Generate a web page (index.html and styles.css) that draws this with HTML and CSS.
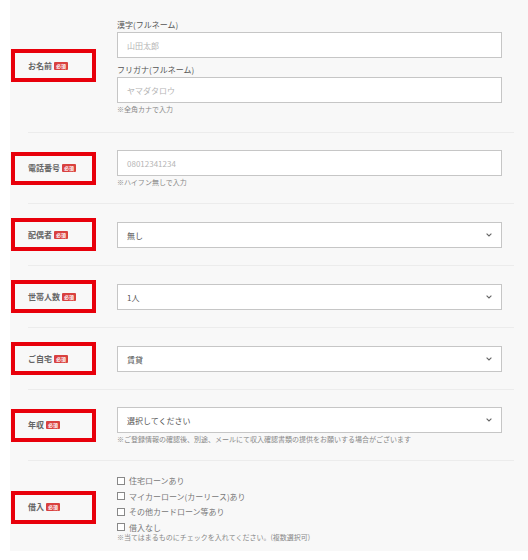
FILE: index.html
```html
<!DOCTYPE html>
<html lang="ja">
<head>
<meta charset="utf-8">
<link rel="stylesheet" href="styles.css">
</head>
<body>
<div class="panel">
  <div class="row row-name">
    <div class="label-cell"><div class="mark"><span class="label">お名前</span><span class="badge">必須</span></div></div>
    <div class="field-cell">
      <div class="sub">漢字(フルネーム)</div>
      <div class="box"><span class="ph">山田太郎</span></div>
      <div class="sub sub2">フリガナ(フルネーム)</div>
      <div class="box"><span class="ph">ヤマダタロウ</span></div>
      <div class="hint">※全角カナで入力</div>
    </div>
  </div>
  <div class="sep"></div>
  <div class="row row-hint">
    <div class="label-cell"><div class="mark"><span class="label">電話番号</span><span class="badge">必須</span></div></div>
    <div class="field-cell">
      <div class="box"><span class="ph">08012341234</span></div>
      <div class="hint">※ハイフン無しで入力</div>
    </div>
  </div>
  <div class="sep"></div>
  <div class="row">
    <div class="label-cell"><div class="mark"><span class="label">配偶者</span><span class="badge">必須</span></div></div>
    <div class="field-cell">
      <div class="box select"><span class="val">無し</span><svg class="chev" width="6" height="4" viewBox="0 0 6 4"><path d="M0.6 0.6 L3 3 L5.4 0.6" fill="none" stroke="#666" stroke-width="1.1"/></svg></div>
    </div>
  </div>
  <div class="sep"></div>
  <div class="row">
    <div class="label-cell"><div class="mark"><span class="label">世帯人数</span><span class="badge">必須</span></div></div>
    <div class="field-cell">
      <div class="box select"><span class="val">1人</span><svg class="chev" width="6" height="4" viewBox="0 0 6 4"><path d="M0.6 0.6 L3 3 L5.4 0.6" fill="none" stroke="#666" stroke-width="1.1"/></svg></div>
    </div>
  </div>
  <div class="sep"></div>
  <div class="row">
    <div class="label-cell"><div class="mark"><span class="label">ご自宅</span><span class="badge">必須</span></div></div>
    <div class="field-cell">
      <div class="box select"><span class="val">賃貸</span><svg class="chev" width="6" height="4" viewBox="0 0 6 4"><path d="M0.6 0.6 L3 3 L5.4 0.6" fill="none" stroke="#666" stroke-width="1.1"/></svg></div>
    </div>
  </div>
  <div class="sep"></div>
  <div class="row row-hint">
    <div class="label-cell"><div class="mark"><span class="label">年収</span><span class="badge">必須</span></div></div>
    <div class="field-cell">
      <div class="box select"><span class="val">選択してください</span><svg class="chev" width="6" height="4" viewBox="0 0 6 4"><path d="M0.6 0.6 L3 3 L5.4 0.6" fill="none" stroke="#666" stroke-width="1.1"/></svg></div>
      <div class="hint">※ご登録情報の確認後、別途、メールにて収入確認書類の提供をお願いする場合がございます</div>
    </div>
  </div>
  <div class="sep"></div>
  <div class="row row-check">
    <div class="label-cell"><div class="mark"><span class="label">借入</span><span class="badge">必須</span></div></div>
    <div class="field-cell">
      <div class="check"><span class="cb"></span>住宅ローンあり</div>
      <div class="check"><span class="cb"></span>マイカーローン(カーリース)あり</div>
      <div class="check"><span class="cb"></span>その他カードローン等あり</div>
      <div class="check"><span class="cb"></span>借入なし</div>
      <div class="hint note">※当てはまるものにチェックを入れてください。(複数選択可)</div>
    </div>
  </div>
</div>
</body>
</html>
```
FILE: styles.css
```css
* { box-sizing: border-box; }
html, body { margin: 0; padding: 0; background: #fff; }
body {
  font-family: "Noto Sans CJK JP", "Noto Sans", sans-serif;
  color: #555;
}
.panel {
  margin-left: 10px;
  background: #f8f8f8;
  width: 518px;
}
.row {
  display: grid;
  grid-template-columns: 107px 385px;
  padding: 18px 0 17px 0;
}
.row-name { padding: 18px 0 18px 0; }
.row-hint { padding: 17px 0 16px 0; }
.row-check { padding: 12px 0 9px 0; }
.sep {
  height: 1px;
  background: #ececec;
  margin: 0 14px 0 18px;
}
.label-cell {
  display: flex;
  align-items: center;
}
.mark {
  width: 85px;
  height: 33px;
  margin: -4px 0 -3px 1px;
  border: 4px solid #e8000b;
  display: flex;
  align-items: center;
  padding-left: 13px;
}
.label {
  font-size: 8px;
  line-height: 10px;
  font-weight: 700;
  color: #666;
}
.badge {
  margin-left: 2px;
  background: #d9413f;
  color: #fff;
  font-size: 5px;
  line-height: 8px;
  height: 8px;
  padding: 0 2px;
  border-radius: 1px;
  font-weight: 700;
}
.field-cell {
  display: flex;
  flex-direction: column;
}
.sub {
  font-size: 8px;
  line-height: 14px;
  color: #555;
}
.sub2 { margin-top: 5px; }
.box {
  height: 26px;
  background: #fff;
  border: 1px solid #c6c6c6;
  display: flex;
  align-items: center;
  padding: 0 9px 0 9px;
  font-size: 8px;
}
.ph { color: #b5b5b5; }
.val { color: #555; flex: 1; }
.chev { display: block; }
.hint {
  font-size: 7px;
  line-height: 10px;
  color: #888;
  margin-top: 1px;
  white-space: nowrap;
}
.check {
  display: flex;
  align-items: center;
  font-size: 8px;
  line-height: 15.5px;
  color: #777;
}
.cb {
  width: 8px;
  height: 8px;
  border: 1px solid #888;
  background: #fff;
  margin-right: 4px;
}
.note { margin-top: -2px; line-height: 9px; }
```
